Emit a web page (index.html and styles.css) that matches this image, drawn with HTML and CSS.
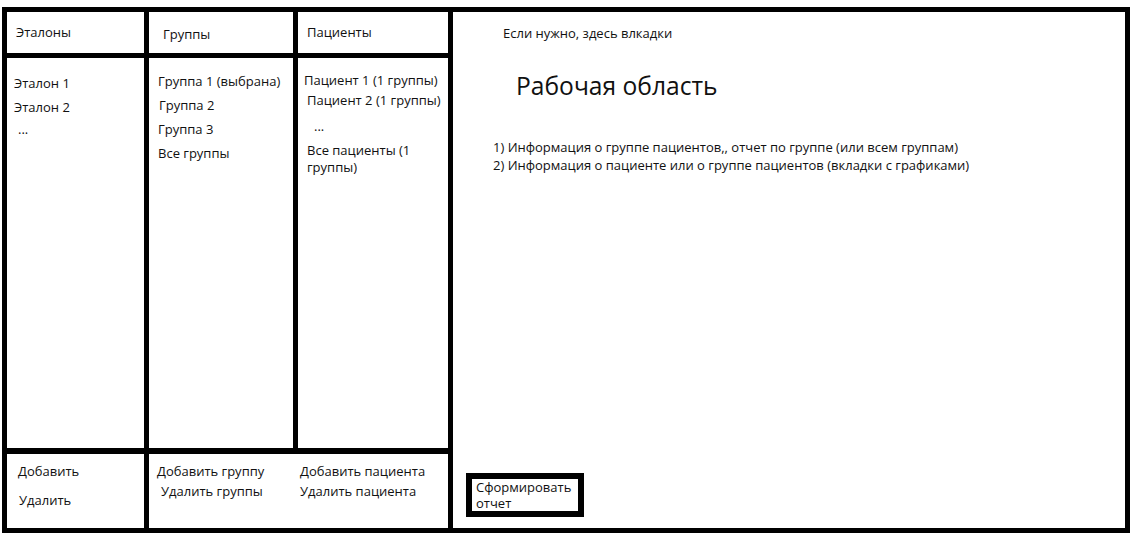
FILE: index.html
```html
<!DOCTYPE html>
<html lang="ru">
<head>
  <meta charset="UTF-8" />
  <title>Эталоны и группы</title>
  <meta name="viewport" content="width=device-width, initial-scale=1.0" />
  <link rel="stylesheet" href="styles.css">
</head>
<body>

<div class="board">
  <div class="panels">
    <div class="cell head col-etalons">Эталоны</div>
    <div class="cell head col-groups">Группы</div>
    <div class="cell head col-patients last">Пациенты</div>

    <div class="cell body col-etalons">
      <ul class="list list-etalons">
        <li>Эталон 1</li>
        <li>Эталон 2</li>
        <li class="dots">...</li>
      </ul>
    </div>
    <div class="cell body col-groups">
      <ul class="list list-groups">
        <li>Группа 1 (выбрана)</li>
        <li class="nudge">Группа 2</li>
        <li>Группа 3</li>
        <li>Все группы</li>
      </ul>
    </div>
    <div class="cell body col-patients last">
      <ul class="list list-patients">
        <li>Пациент 1 (1 группы)</li>
        <li class="nudge">Пациент 2 (1 группы)</li>
        <li class="dots">...</li>
        <li class="wrap">Все пациенты (1 группы)</li>
      </ul>
    </div>

    <div class="cell foot col-etalons">
      <div class="action">Добавить</div>
      <div class="action action-low">Удалить</div>
    </div>
    <div class="cell foot foot-wide">
      <div class="actions actions-groups">
        <div class="action">Добавить группу</div>
        <div class="action nudge">Удалить группы</div>
      </div>
      <div class="actions actions-patients">
        <div class="action">Добавить пациента</div>
        <div class="action">Удалить пациента</div>
      </div>
    </div>
  </div>

  <div class="workspace">
    <div class="tabs">Если нужно, здесь влкадки</div>
    <h1 class="title">Рабочая область</h1>
    <ol class="notes">
      <li>1) Информация о группе пациентов,, отчет по группе (или всем группам)</li>
      <li>2) Информация о пациенте или о группе пациентов (вкладки с графиками)</li>
    </ol>
    <button class="report">Сформировать отчет</button>
  </div>
</div>

</body>
</html>
```

FILE: styles.css
```css
html, body {
  margin: 0;
  padding: 0;
  background: #fff;
  color: #111;
  font-family: 'Open Sans', sans-serif;
  font-size: 13px;
}

.board {
  display: flex;
  padding: 7px 0 0 2px;
  height: 526px;
}

/* левая часть: три колонки */
.panels {
  width: 451px;
  box-sizing: border-box;
  border: 5px solid #000;
  display: grid;
  grid-template-columns: 142px 149px 150px;
  grid-template-rows: 46px 396px 74px;
}

.cell {
  box-sizing: border-box;
  border-right: 5px solid #000;
}
.cell.last {
  border-right: none;
}

.head {
  border-bottom: 5px solid #000;
  display: flex;
  align-items: center;
}
.head.col-etalons { padding: 0 0 2px 9px; }
.head.col-groups { padding: 2px 0 0 14px; }
.head.col-patients { padding: 0 0 2px 9px; }

.body {
  border-bottom: 6px solid #000;
}

.list {
  list-style: none;
  margin: 0;
  padding: 0;
}
.list-etalons {
  padding: 13px 0 0 7px;
  line-height: 24px;
}
.list-groups {
  padding: 11px 0 0 9px;
  line-height: 24px;
}
.list-patients {
  padding: 12px 0 0 6px;
  line-height: 20px;
}
.list .nudge { padding-left: 3px; }
.list-groups .nudge { padding-left: 1px; }
.list-etalons .dots { padding-left: 4px; margin-top: -2px; }
.list-patients .dots { padding-left: 10px; margin-top: 6px; }
.list-patients .wrap {
  max-width: 118px;
  margin-top: 6px;
  padding-left: 3px;
  line-height: 17px;
}

.foot {
  padding-top: 7px;
  line-height: 20px;
}
.foot.col-etalons { padding-left: 11px; }
.foot .action-low { margin-top: 9px; padding-left: 1px; }

.foot-wide {
  grid-column: 2 / 4;
  border-right: none;
  display: flex;
  padding-left: 8px;
}
.actions-groups { width: 143px; }
.actions-groups .nudge { padding-left: 4px; }

/* рабочая область */
.workspace {
  flex: 1;
  margin-right: 3px;
  box-sizing: border-box;
  border: 5px solid #000;
  border-left: none;
  display: flex;
  flex-direction: column;
  align-items: flex-start;
}

.tabs {
  margin: 11px 0 0 50px;
  line-height: 20px;
}

.title {
  margin: 27px 0 0 63px;
  font-size: 24.6px;
  font-weight: normal;
  line-height: 32px;
}

.notes {
  list-style: none;
  margin: 36px 0 0 40px;
  padding: 0;
  line-height: 18px;
}

.report {
  margin: auto 0 11px 13px;
  width: 118px;
  height: 44px;
  box-sizing: border-box;
  border: 6px solid #000;
  border-radius: 0;
  background: #fff;
  color: #111;
  font: inherit;
  line-height: 16px;
  text-align: left;
  padding: 0 0 0 4px;
}
```
